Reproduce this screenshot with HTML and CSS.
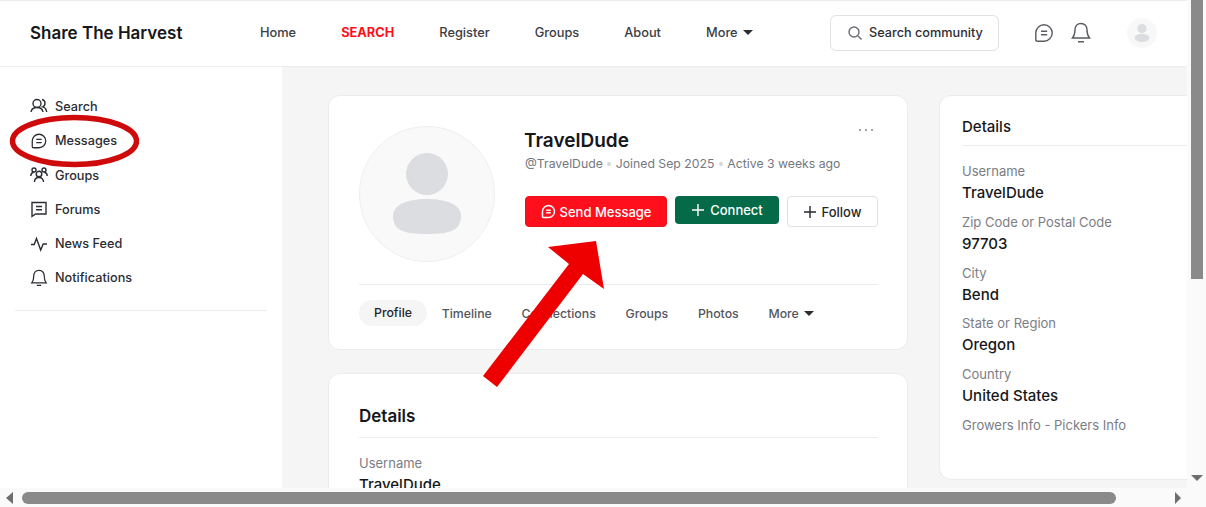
FILE: index.html
```html
<!DOCTYPE html>
<html lang="en">
<head>
<meta charset="UTF-8">
<meta name="viewport" content="width=device-width, initial-scale=1.0">
<title>Share The Harvest</title>
<link rel="stylesheet" href="styles.css">
</head>
<body>
  <div class="window">
    <div class="viewport">
      <header class="topbar">
        <div class="brand">Share The Harvest</div>
        <nav class="topnav">
          <a>Home</a>
          <a class="current">SEARCH</a>
          <a>Register</a>
          <a>Groups</a>
          <a>About</a>
          <a>More <span class="caret"></span></a>
        </nav>
        <div class="search-box">
          <svg class="ico" width="16" height="16" viewBox="0 0 16 16"><circle cx="7" cy="7" r="5"/><path d="M11 11l3.500 3.500"/></svg>
          <span>Search community</span>
        </div>
        <svg class="ico top-ico" width="20" height="20" viewBox="0 0 20 20"><path d="M10 1.800a8.200 8.200 0 1 1 0 16.400H3.600q-1.800 0-1.800-1.800V10A8.200 8.200 0 0 1 10 1.800zM7 8.300h6.200M7 11.700h6.200"/></svg>
        <svg class="ico top-ico bell" width="20" height="22" viewBox="0 0 20 22"><path d="M10 1.500c-3.800 0-6 2.800-6 6.300 0 4.200-.8 6.200-2.500 8.200h17c-1.700-2-2.500-4-2.500-8.200 0-3.500-2.200-6.300-6-6.300zM7 19.800h6"/></svg>
        <div class="mini-avatar">
          <svg width="30" height="30" viewBox="0 0 136 136"><circle cx="68" cy="48" r="21"/><ellipse cx="68" cy="90" rx="34" ry="19"/></svg>
        </div>
      </header>

      <div class="page">
        <aside class="sidebar">
          <ul class="side-menu">
            <li><svg class="ico" width="18" height="18" viewBox="0 0 18 18"><circle cx="7" cy="6.500" r="4"/><path d="M1 15c.5-3 2.500-4.500 6-4.500s5.500 1.500 6 4.500M12 2.500c2 .3 3 1.800 3 3.800 0 1.500-.8 3-2.300 3.600 2 .6 3.600 2.400 4 5.100"/></svg>Search</li>
            <li><svg class="ico" width="18" height="18" viewBox="0 0 20 20"><path d="M10 2.500a7.500 7.500 0 1 1 0 15H4Q2.500 17.500 2.500 16v-6A7.500 7.500 0 0 1 10 2.500zM7 8.300h6M7 11.700h6"/></svg>Messages</li>
            <li><svg class="ico" width="18" height="18" viewBox="0 0 18 18"><circle cx="9" cy="8" r="2.800"/><path d="M4.500 16c0-2.800 1.800-4.500 4.500-4.500s4.500 1.700 4.500 4.500"/><circle cx="4" cy="4" r="2"/><circle cx="14" cy="4" r="2"/><path d="M.8 10c0-2 1-3.500 2.800-3.800M17.200 10c0-2-1-3.500-2.800-3.800"/></svg>Groups</li>
            <li><svg class="ico" width="18" height="18" viewBox="0 0 18 18"><path d="M2 2.500h14v11.500H5.500L2 16.500zM6 6.500h6M6 9.800h6"/></svg>Forums</li>
            <li><svg class="ico" width="18" height="18" viewBox="0 0 18 18"><path d="M1 9.500h3.200L6.500 3.500l4.200 11.500 2.500-6H17"/></svg>News Feed</li>
            <li><svg class="ico" width="18" height="18" viewBox="0 0 20 20"><path d="M10 1.500c-3.800 0-5.800 2.800-5.800 6 0 4-.7 6-2.200 8h16c-1.500-2-2.200-4-2.200-8 0-3.200-2-6-5.800-6zM7.500 18.300h5"/></svg>Notifications</li>
          </ul>
          <div class="side-rule"></div>
        </aside>

        <main class="content">
          <div class="main-col">
            <section class="card profile-card">
              <div class="profile-head">
                <div class="big-avatar">
                  <svg width="136" height="136" viewBox="0 0 136 136"><circle cx="68" cy="48" r="21"/><path d="M34 90c0-12 16-17 34-17s34 5 34 17c0 14-10 18-34 18s-34-4-34-18z"/></svg>
                </div>
                <div class="profile-info">
                  <h1>TravelDude</h1>
                  <p class="meta">@TravelDude <i></i> Joined Sep 2025 <i></i> Active 3 weeks ago</p>
                  <div class="actions">
                    <button class="btn btn-red"><svg class="ico" width="15" height="15" viewBox="0 0 20 20"><path d="M10 2a8 8 0 1 1 0 16H3.500Q2 18 2 16.500V10a8 8 0 0 1 8-8zM7 8.300h6M7 11.700h6"/></svg>Send Message</button>
                    <button class="btn btn-green"><svg class="ico" width="14" height="14" viewBox="0 0 14 14"><path d="M7 1v12M1 7h12"/></svg>Connect</button>
                    <button class="btn btn-plain"><svg class="ico" width="14" height="14" viewBox="0 0 14 14"><path d="M7 1v12M1 7h12"/></svg>Follow</button>
                  </div>
                </div>
                <div class="dots"><i></i><i></i><i></i></div>
              </div>
              <div class="tabs">
                <a class="active">Profile</a>
                <a>Timeline</a>
                <a>Connections</a>
                <a>Groups</a>
                <a>Photos</a>
                <a>More <span class="caret"></span></a>
              </div>
            </section>
            <section class="card details-card">
              <h2>Details</h2>
              <div class="field"><span>Username</span><b>TravelDude</b></div>
            </section>
          </div>

          <aside class="card right-card">
            <h3>Details</h3>
            <div class="field"><span>Username</span><b>TravelDude</b></div>
            <div class="field"><span>Zip Code or Postal Code</span><b>97703</b></div>
            <div class="field"><span>City</span><b>Bend</b></div>
            <div class="field"><span>State or Region</span><b>Oregon</b></div>
            <div class="field"><span>Country</span><b>United States</b></div>
            <div class="field"><span>Growers Info - Pickers Info</span></div>
          </aside>
        </main>
      </div>
    </div>

    <div class="vbar">
      <div class="vthumb"></div>
      <div class="arrow-down"></div>
    </div>
    <div class="hbar">
      <div class="arrow-left"></div>
      <div class="hthumb"></div>
      <div class="arrow-right"></div>
    </div>

    <!-- annotations drawn over the screenshot -->
    <svg class="markup" width="1206" height="507" viewBox="0 0 1206 507">
      <ellipse cx="74.500" cy="141" rx="62" ry="23.500" fill="none" stroke="#cf0a0a" stroke-width="5.500"/>
      <path d="M483 376L569 264 548 247 596 241 604 289 583 274 497 387z" fill="#ee0000"/>
    </svg>
  </div>
</body>
</html>
```

FILE: styles.css
```css
* {
  box-sizing: border-box;
}
html, body {
  margin: 0;
  height: 100%;
  overflow: hidden;
}
body {
  font-family: Inter, "Liberation Sans", sans-serif;
  color: #1c1d21;
  background-color: #ffffff;
}
.window {
  position: relative;
  width: 1206px;
  height: 507px;
  display: grid;
  grid-template-columns: 1187px 19px;
  grid-template-rows: 488px 19px;
  overflow: hidden;
}
.viewport {
  overflow: hidden;
  border-top: 1px solid #ececec;
  display: flex;
  flex-direction: column;
}
.ico {
  fill: none;
  stroke: currentColor;
  stroke-width: 1.4;
  flex: none;
}

/* top bar */
.topbar {
  height: 66px;
  flex: none;
  display: flex;
  align-items: center;
  padding: 0 0 2px 30px;
  background-color: #ffffff;
  border-bottom: 1px solid #ececec;
}
.brand {
  width: 230px;
  font-size: 17px;
  font-weight: 600;
  color: #16171a;
}
.topnav {
  display: flex;
  gap: 45px;
  width: 570px;
  font-size: 12.800px;
  font-weight: 500;
  color: #3b3d44;
}
.topnav .current {
  color: #ff0f1c;
  font-weight: 700;
}
.caret {
  display: inline-block;
  width: 0;
  height: 0;
  margin-left: 2px;
  vertical-align: 2px;
  border-left: 5px solid transparent;
  border-right: 5px solid transparent;
  border-top: 5px solid #2c2d33;
}
.search-box {
  width: 169px;
  height: 36px;
  display: flex;
  align-items: center;
  gap: 6px;
  padding-left: 16px;
  border: 1px solid #e1e1e3;
  border-radius: 6px;
  font-size: 12.700px;
  font-weight: 500;
  color: #2c2d33;
}
.search-box .ico {
  color: #6b6d74;
}
.top-ico {
  margin-left: 35px;
  color: #5a5c63;
}
.top-ico.bell {
  margin-left: 17px;
}
.mini-avatar {
  width: 30px;
  height: 30px;
  margin-left: 36px;
  border-radius: 50%;
  background-color: #f8f8f8;
}
.mini-avatar svg {
  display: block;
  fill: #dcdde0;
}

/* page */
.page {
  flex: 1;
  display: flex;
  min-height: 0;
}
.sidebar {
  width: 282px;
  flex: none;
  background-color: #ffffff;
  padding: 22.300px 15px 0;
}
.side-menu {
  list-style: none;
  margin: 0;
  padding: 0 0 14.700px 15px;
  font-size: 12.700px;
  font-weight: 500;
  color: #2c2d33;
}
.side-menu li {
  height: 34.300px;
  display: flex;
  align-items: center;
  gap: 7px;
}
.side-rule {
  height: 1px;
  background-color: #ececec;
}
.content {
  flex: 1;
  display: flex;
  gap: 31px;
  padding: 28px 0 0 46px;
  min-width: 0;
  background-color: #f5f5f5;
}
.main-col {
  width: 580px;
  flex: none;
  display: flex;
  flex-direction: column;
  gap: 23px;
}
.card {
  background-color: #ffffff;
  border: 1px solid #ececec;
  border-radius: 12px;
}

/* profile card */
.profile-card {
  height: 255px;
  flex: none;
  padding: 30px 29px 0 30px;
}
.profile-head {
  position: relative;
  height: 159px;
  display: flex;
  gap: 30px;
  border-bottom: 1px solid #ececec;
}
.big-avatar {
  width: 136px;
  height: 136px;
  border-radius: 50%;
  background-color: #f9f9f9;
  border: 1px solid #efefef;
  flex: none;
}
.big-avatar svg {
  display: block;
  margin: -1px;
  fill: #dcdde0;
}
.profile-info h1 {
  margin: 2px 0 2px -1px;
  font-size: 19px;
  line-height: 26px;
  font-weight: 600;
  color: #16171a;
}
.meta {
  margin: 0 0 24px;
  font-size: 12.250px;
  line-height: 16px;
  color: #75777e;
  white-space: nowrap;
}
.meta i {
  display: inline-block;
  width: 4px;
  height: 4px;
  margin: 0 1px;
  vertical-align: 2px;
  border-radius: 50%;
  background-color: #d6d7da;
}
.actions {
  display: flex;
  align-items: flex-start;
  gap: 8px;
}
.btn {
  display: flex;
  align-items: center;
  justify-content: center;
  gap: 5px;
  height: 31px;
  padding: 0;
  font: 500 13px Inter, "Liberation Sans", sans-serif;
  border-radius: 4px;
}
.btn-red {
  width: 142px;
  gap: 4px;
  color: #ffffff;
  background-color: #ff0f1c;
  border: 1px solid #e8101b;
}
.btn-red .ico {
  stroke-width: 2;
}
.btn-green {
  width: 104px;
  height: 28px;
  gap: 5px;
  color: #ffffff;
  background-color: #046a47;
  border: none;
}
.btn-plain {
  width: 91px;
  gap: 4px;
  color: #26272c;
  background-color: #ffffff;
  border: 1px solid #e1e1e3;
}
.dots {
  position: absolute;
  top: 3px;
  right: 5px;
  display: flex;
  gap: 4px;
}
.dots i {
  width: 2px;
  height: 2px;
  background-color: #85878d;
  border-radius: 50%;
}
.tabs {
  display: flex;
  align-items: center;
  height: 26px;
  margin-top: 15px;
  font-size: 12.300px;
  font-weight: 500;
  color: #54565d;
  gap: 29.700px;
}
.tabs .active {
  width: 68px;
  height: 26px;
  line-height: 26px;
  text-align: center;
  margin-right: -15px;
  border-radius: 13px;
  background-color: #f5f5f5;
  color: #26272c;
}
.tabs .caret {
  margin-left: 2px;
}

/* details */
.details-card {
  flex: none;
  height: 200px;
  padding: 30px 29px 0 30px;
}
.details-card h2 {
  margin: 0 0 15px;
  padding-bottom: 9px;
  font-size: 17px;
  line-height: 24px;
  font-weight: 600;
  color: #16171a;
  border-bottom: 1px solid #ececec;
}
.field {
  display: flex;
  flex-direction: column;
  height: 50.800px;
}
.field span {
  font-size: 13px;
  line-height: 21px;
  color: #7b7d84;
}
.field b {
  font-size: 15px;
  line-height: 22px;
  font-weight: 500;
  color: #16171a;
}
.right-card {
  width: 280px;
  height: 385px;
  flex: none;
  padding: 21px 22px 0;
}
.right-card h3 {
  margin: 0 0 15px;
  padding-bottom: 8px;
  font-size: 15px;
  line-height: 20px;
  font-weight: 500;
  color: #16171a;
  border-bottom: 1px solid #ececec;
}

/* scrollbars */
.vbar {
  position: relative;
  background-color: #fafafa;
  grid-row: 1;
  grid-column: 2;
  padding: 0 3px 0 4px;
}
.vthumb {
  height: 279px;
  background-color: #8a8a8a;
}
.arrow-down {
  position: absolute;
  top: 475px;
  left: 4px;
  border-left: 6px solid transparent;
  border-right: 6px solid transparent;
  border-top: 6px solid #6e6e6e;
}
.hbar {
  grid-row: 2;
  grid-column: 1 / 3;
  display: flex;
  align-items: center;
  padding: 0 25px 0 6px;
  background-color: #fafafa;
}
.hthumb {
  width: 1094px;
  height: 12px;
  margin: 0 auto 0 9px;
  border-radius: 6px;
  background-color: #8a8a8a;
}
.arrow-left {
  border-top: 6px solid transparent;
  border-bottom: 6px solid transparent;
  border-right: 7px solid #6e6e6e;
}
.arrow-right {
  border-top: 6px solid transparent;
  border-bottom: 6px solid transparent;
  border-left: 6px solid #6e6e6e;
}
.markup {
  position: absolute;
  top: 0;
  left: 0;
  pointer-events: none;
}
```
